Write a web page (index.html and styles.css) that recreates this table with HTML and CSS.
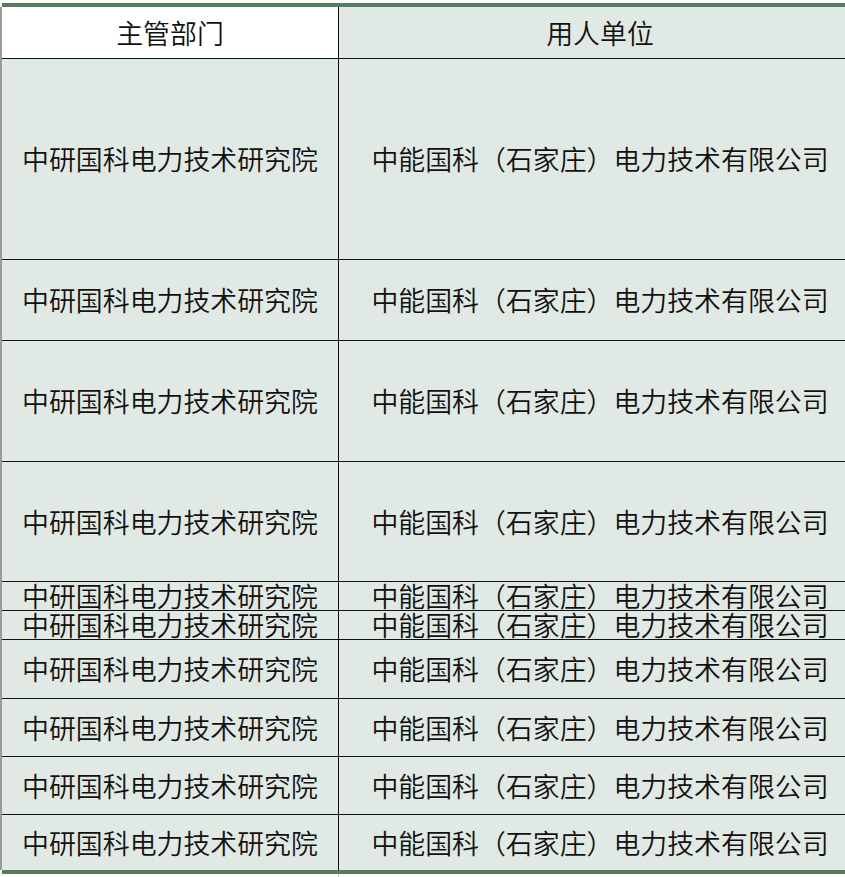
FILE: index.html
```html
<!DOCTYPE html>
<html lang="zh-CN">
<head>
<meta charset="utf-8">
<title>主管部门 / 用人单位</title>
<link rel="stylesheet" href="styles.css">
</head>
<body>
<div class="sheet">
  <div class="topbar"></div>
  <div class="table">
    <div class="row head h51">
      <div class="cell c1 white">主管部门</div>
      <div class="cell c2">用人单位</div>
    </div>
    <div class="row h200"><div class="cell c1">中研国科电力技术研究院</div><div class="cell c2">中能国科（石家庄）电力技术有限公司</div></div>
    <div class="row h80"><div class="cell c1">中研国科电力技术研究院</div><div class="cell c2">中能国科（石家庄）电力技术有限公司</div></div>
    <div class="row h120"><div class="cell c1">中研国科电力技术研究院</div><div class="cell c2">中能国科（石家庄）电力技术有限公司</div></div>
    <div class="row h119"><div class="cell c1">中研国科电力技术研究院</div><div class="cell c2">中能国科（石家庄）电力技术有限公司</div></div>
    <div class="row h28"><div class="cell c1">中研国科电力技术研究院</div><div class="cell c2">中能国科（石家庄）电力技术有限公司</div></div>
    <div class="row h28"><div class="cell c1">中研国科电力技术研究院</div><div class="cell c2">中能国科（石家庄）电力技术有限公司</div></div>
    <div class="row h58"><div class="cell c1">中研国科电力技术研究院</div><div class="cell c2">中能国科（石家庄）电力技术有限公司</div></div>
    <div class="row h57"><div class="cell c1">中研国科电力技术研究院</div><div class="cell c2">中能国科（石家庄）电力技术有限公司</div></div>
    <div class="row h57"><div class="cell c1">中研国科电力技术研究院</div><div class="cell c2">中能国科（石家庄）电力技术有限公司</div></div>
    <div class="row h55 last"><div class="cell c1">中研国科电力技术研究院</div><div class="cell c2">中能国科（石家庄）电力技术有限公司</div></div>
  </div>
  <div class="bottombar"></div>
  <div class="tail"><div class="tail-line"></div></div>
</div>
</body>
</html>
```
FILE: styles.css
```css
html, body {
  margin: 0;
  padding: 0;
  background: #ffffff;
  overflow: hidden;
}
.sheet {
  width: 861px;
  padding-top: 3px;
  font-family: "Noto Sans CJK SC", "Microsoft YaHei", sans-serif;
  font-weight: 350;
  font-size: 26.9px;
  color: #111111;
}
.topbar, .bottombar {
  height: 4px;
  background: #587c62;
  margin-left: 2px;
}
.table {
  border-left: 2px solid #9b9b9b;
  background: #e1e9e4;
}
.row {
  display: flex;
  box-sizing: content-box;
  border-bottom: 1px solid #111111;
}
.row.last { border-bottom: none; }
.cell {
  display: flex;
  align-items: center;
  justify-content: center;
  white-space: nowrap;
  line-height: 28px;
}
.c1 {
  width: 336px;
  border-right: 1px solid #111111;
}
.c2 {
  width: 522px;
}
.white { background: #ffffff; }
.h51 { height: 51px; }
.h200 { height: 200px; }
.h80 { height: 80px; }
.h120 { height: 120px; }
.h119 { height: 119px; }
.h28 { height: 28px; }
.h58 { height: 58px; }
.h57 { height: 57px; }
.h55 { height: 55px; }
.tail {
  height: 10px;
  padding-left: 338px;
}
.tail-line {
  width: 1px;
  height: 100%;
  background: #cfcfcf;
}
```
